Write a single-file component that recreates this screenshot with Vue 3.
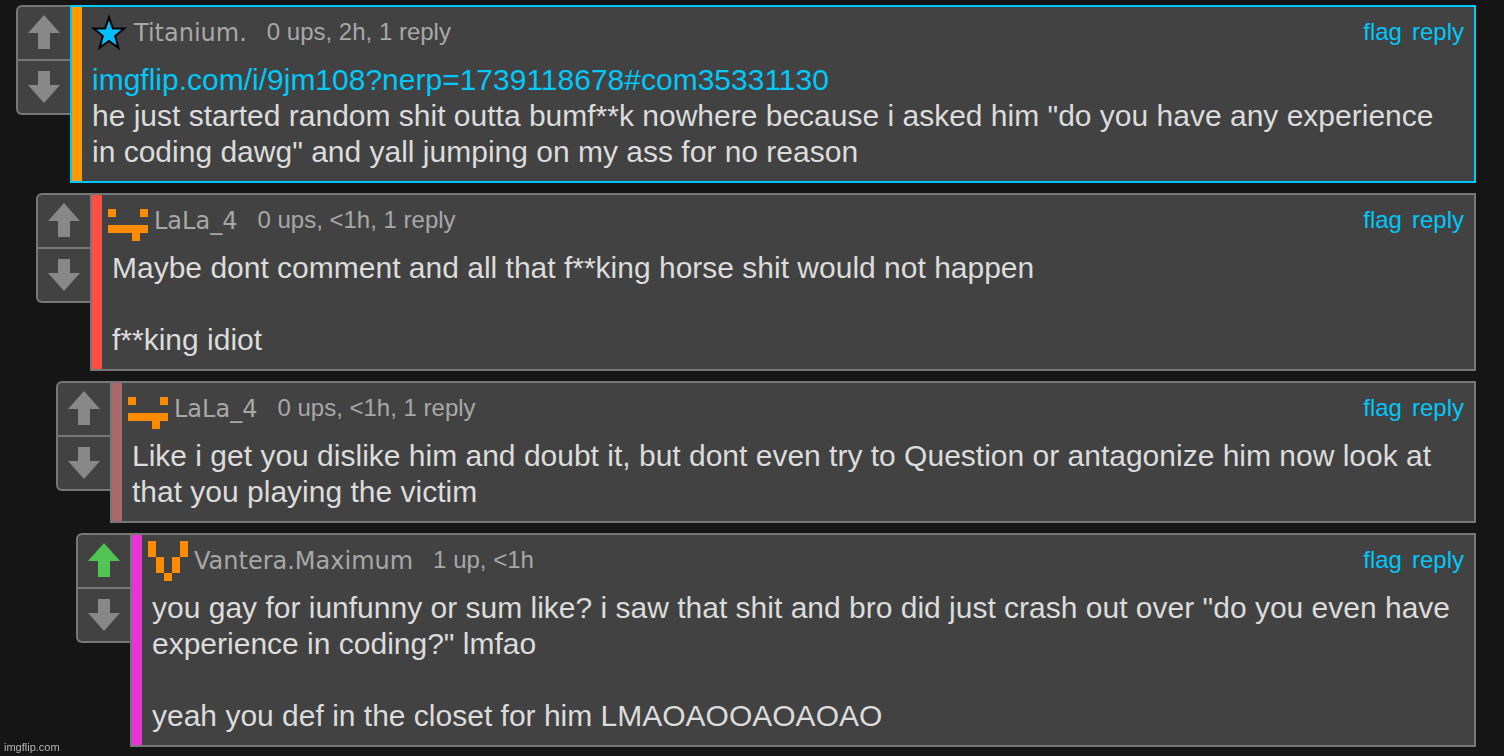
<template>
  <main class="comments">
    <article
      v-for="com in comments"
      :key="com.id"
      class="com"
      :style="{ marginLeft: com.depth * 20 + 'px' }"
    >
      <div class="votes">
        <button type="button" class="vote up" :class="{ voted: com.upvoted }" aria-label="Upvote" @click="com.upvoted = !com.upvoted">
          <svg width="32" height="34" viewBox="0 0 32 34"><path d="M16 0L32 18H22V34H10V18H0Z" /></svg>
        </button>
        <button type="button" class="vote down" aria-label="Downvote">
          <svg width="32" height="32" viewBox="0 0 32 32"><path d="M10 0H22V14H32L16 32L0 14H10Z" /></svg>
        </button>
      </div>

      <div class="box" :class="{ highlighted: com.highlighted }">
        <div class="stripe" :style="{ background: com.color }"></div>
        <div class="content">
          <header class="head">
            <svg class="icon" width="40" height="40" viewBox="0 0 40 40">
              <polygon
                v-if="com.icon === 'star'"
                class="star"
                points="21,4.3 24.9,15.6 36.2,15.6 27.2,23 30.4,34.8 21,28 11.6,34.8 14.8,23 5.8,15.6 17.1,15.6"
              />
              <path v-else class="pixels" :d="icons[com.icon]" shape-rendering="crispEdges" />
            </svg>
            <span class="user">{{ com.user }}</span>
            <span class="meta">{{ com.meta }}</span>
            <nav class="actions">
              <a href="#flag">flag</a>
              <a href="#reply">reply</a>
            </nav>
          </header>
          <div class="text"><a v-if="com.link" class="link" href="#com35331130">{{ com.link }}</a>{{ com.text }}</div>
        </div>
      </div>
    </article>
  </main>
  <div class="watermark">imgflip.com</div>
</template>

<script setup>
import { ref } from 'vue'

// 5x5 pixel icons, 8px per cell
const icons = {
  smile: 'M0 8h8v8H0zM32 8h8v8h-8zM0 24h40v8H0zM24 32h8v8h-8z',
  vee: 'M0 0h8v16H0zM32 0h8v16h-8zM8 16h8v16H8zM24 16h8v16h-8zM16 32h8v8h-8z',
}

const comments = ref([
  {
    id: 1,
    depth: 0,
    user: 'Titanium.',
    icon: 'star',
    meta: '0 ups, 2h, 1 reply',
    color: '#ff9900',
    highlighted: true,
    upvoted: false,
    link: 'imgflip.com/i/9jm108?nerp=1739118678#com35331130',
    text: '\nhe just started random shit outta bumf**k nowhere because i asked him "do you have any experience in coding dawg" and yall jumping on my ass for no reason',
  },
  {
    id: 2,
    depth: 1,
    user: 'LaLa_4',
    icon: 'smile',
    meta: '0 ups, <1h, 1 reply',
    color: '#ff4f42',
    upvoted: false,
    text: 'Maybe dont comment and all that f**king horse shit would not happen\n\nf**king idiot',
  },
  {
    id: 3,
    depth: 2,
    user: 'LaLa_4',
    icon: 'smile',
    meta: '0 ups, <1h, 1 reply',
    color: '#aa6a69',
    upvoted: false,
    text: 'Like i get you dislike him and doubt it, but dont even try to Question or antagonize him now look at that you playing the victim',
  },
  {
    id: 4,
    depth: 3,
    user: 'Vantera.Maximum',
    icon: 'vee',
    meta: '1 up, <1h',
    color: '#e835d5',
    upvoted: true,
    text: 'you gay for iunfunny or sum like? i saw that shit and bro did just crash out over "do you even have experience in coding?" lmfao\n\nyeah you def in the closet for him LMAOAOOAOAOAO',
  },
])
</script>

<style>
body {
  background: #151515;
}
</style>

<style scoped>
.comments {
  padding: 5px 28px 9px 16px;
  font-family: "Liberation Sans", Arial, sans-serif;
  color: #dcdcdc;
}

.com {
  display: flex;
  align-items: flex-start;
}

.com + .com {
  margin-top: 10px;
}

.votes {
  flex: none;
  width: 54px;
  box-sizing: border-box;
  border: 2px solid #777;
  border-right: 0;
  border-radius: 6px 0 0 6px;
  background: #424242;
}

.vote {
  display: flex;
  justify-content: center;
  box-sizing: border-box;
  width: 100%;
  height: 52px;
  margin: 0;
  padding: 8px 0 0;
  border: 0;
  background: none;
  cursor: pointer;
}

.vote.down {
  height: 54px;
  padding-top: 10px;
  border-top: 2px solid #777;
}

.vote svg {
  display: block;
  fill: #888;
}

.vote.voted svg {
  fill: #50c556;
}

.box {
  display: flex;
  flex: 1;
  min-width: 0;
  border: 2px solid #777;
  background: #424242;
}

.box.highlighted {
  border-color: #00c8fa;
}

.stripe {
  flex: none;
  width: 10px;
}

.content {
  flex: 1;
  min-width: 0;
  padding: 6px 10px 11px;
}

.head {
  display: flex;
  align-items: flex-start;
  height: 49px;
  margin-left: -4px;
  font-size: 24px;
  line-height: 38px;
  color: #a8a8a8;
}

.icon {
  flex: none;
  margin-right: 6px;
}

.star {
  fill: #00bfff;
  stroke: #000;
  stroke-width: 2;
  stroke-miterlimit: 8;
}

.pixels {
  fill: #ff8c00;
}

.user {
  font-family: Verdana, "DejaVu Sans", sans-serif;
  line-height: 40px;
  margin-right: 20px;
}

.actions {
  display: flex;
  gap: 10px;
  margin-left: auto;
}

a {
  color: #00c8fa;
  text-decoration: none;
}

.text {
  font-size: 30px;
  line-height: 36px;
  white-space: pre-line;
  overflow-wrap: break-word;
}

.watermark {
  position: fixed;
  left: 4px;
  bottom: 2px;
  font: 11px/14px "Liberation Sans", Arial, sans-serif;
  color: #b5b5b5;
}
</style>
